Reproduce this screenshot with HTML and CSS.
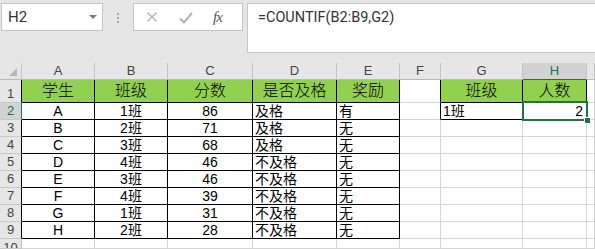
FILE: index.html
```html
<!DOCTYPE html>
<html lang="zh-CN">
<head>
	<meta charset="UTF-8">
	<title>COUNTIF</title>
	<link rel="stylesheet" href="styles.css">
</head>
<body>
	<div class="toolbar">
		<div class="namebox"><span>H2</span><span class="caret"></span></div>
		<div class="dots"><i></i><i></i><i></i></div>
		<div class="fxbox">
			<svg class="ico" width="12" height="10" viewBox="0 0 12 10"><path d="M1.5 0.5 L10.5 9.5 M10.5 0.5 L1.5 9.5" stroke="#b3b3b3" stroke-width="1.4" fill="none"/></svg>
			<svg class="ico ok" width="14" height="12" viewBox="0 0 14 12"><path d="M1 6.5 L5 10.5 L13 1" stroke="#b3b3b3" stroke-width="2" fill="none"/></svg>
			<span class="fx">fx</span>
		</div>
		<div class="formula">=COUNTIF(B2:B9,G2)</div>
	</div>

	<div class="sheet">
		<!-- column headers -->
		<div class="ch corner"><span class="tri"></span></div>
		<div class="ch">A</div>
		<div class="ch">B</div>
		<div class="ch">C</div>
		<div class="ch">D</div>
		<div class="ch">E</div>
		<div class="ch">F</div>
		<div class="ch">G</div>
		<div class="ch cur">H</div>
		<div class="ch"></div>

		<!-- row 1 -->
		<div class="rh bk">1</div>
		<div class="c hd bx">学生</div>
		<div class="c hd bx">班级</div>
		<div class="c hd bx">分数</div>
		<div class="c hd bx">是否及格</div>
		<div class="c hd bx">奖励</div>
		<div class="c edge"></div>
		<div class="c hd bx">班级</div>
		<div class="c hd bx">人数</div>
		<div class="c"></div>

		<!-- row 2 -->
		<div class="rh cur">2</div>
		<div class="c bx mid">A</div>
		<div class="c bx mid">1班</div>
		<div class="c bx mid">86</div>
		<div class="c bx">及格</div>
		<div class="c bx">有</div>
		<div class="c edge"></div>
		<div class="c bx">1班</div>
		<div class="c bx right active">2<span class="selbox"></span><span class="handle"></span></div>
		<div class="c"></div>

		<!-- row 3 -->
		<div class="rh bk">3</div>
		<div class="c bx mid">B</div>
		<div class="c bx mid">2班</div>
		<div class="c bx mid">71</div>
		<div class="c bx">及格</div>
		<div class="c bx">无</div>
		<div class="c"></div><div class="c"></div><div class="c"></div><div class="c"></div>

		<!-- row 4 -->
		<div class="rh bk">4</div>
		<div class="c bx mid">C</div>
		<div class="c bx mid">3班</div>
		<div class="c bx mid">68</div>
		<div class="c bx">及格</div>
		<div class="c bx">无</div>
		<div class="c"></div><div class="c"></div><div class="c"></div><div class="c"></div>

		<!-- row 5 -->
		<div class="rh bk">5</div>
		<div class="c bx mid">D</div>
		<div class="c bx mid">4班</div>
		<div class="c bx mid">46</div>
		<div class="c bx">不及格</div>
		<div class="c bx">无</div>
		<div class="c"></div><div class="c"></div><div class="c"></div><div class="c"></div>

		<!-- row 6 -->
		<div class="rh bk">6</div>
		<div class="c bx mid">E</div>
		<div class="c bx mid">3班</div>
		<div class="c bx mid">46</div>
		<div class="c bx">不及格</div>
		<div class="c bx">无</div>
		<div class="c"></div><div class="c"></div><div class="c"></div><div class="c"></div>

		<!-- row 7 -->
		<div class="rh bk">7</div>
		<div class="c bx mid">F</div>
		<div class="c bx mid">4班</div>
		<div class="c bx mid">39</div>
		<div class="c bx">不及格</div>
		<div class="c bx">无</div>
		<div class="c"></div><div class="c"></div><div class="c"></div><div class="c"></div>

		<!-- row 8 -->
		<div class="rh bk">8</div>
		<div class="c bx mid">G</div>
		<div class="c bx mid">1班</div>
		<div class="c bx mid">31</div>
		<div class="c bx">不及格</div>
		<div class="c bx">无</div>
		<div class="c"></div><div class="c"></div><div class="c"></div><div class="c"></div>

		<!-- row 9 -->
		<div class="rh bk">9</div>
		<div class="c bx mid">H</div>
		<div class="c bx mid">2班</div>
		<div class="c bx mid">28</div>
		<div class="c bx">不及格</div>
		<div class="c bx">无</div>
		<div class="c"></div><div class="c"></div><div class="c"></div><div class="c"></div>

		<!-- row 10 -->
		<div class="rh last">10</div>
		<div class="c"></div><div class="c"></div><div class="c"></div><div class="c"></div><div class="c"></div>
		<div class="c"></div><div class="c"></div><div class="c"></div><div class="c"></div>
	</div>
</body>
</html>
```

FILE: styles.css
```css
*{
	margin:0;
	padding:0;
	box-sizing:border-box;
}
body{
	width:595px;
	height:249px;
	overflow:hidden;
	background:#e6e6e6;
	font-family:"Liberation Sans","Noto Sans CJK SC",sans-serif;
	color:#000;
}

/* formula bar */
.toolbar{
	display:flex;
	align-items:flex-start;
	height:63px;
	padding:3px 0 0 1px;
}
.namebox{
	width:102px;
	height:28px;
	background:#fff;
	border:1px solid #c6c6c6;
	display:flex;
	align-items:center;
	justify-content:space-between;
	padding:0 5px 0 6px;
	font-family:Roboto,"Liberation Sans",sans-serif;
	font-size:15px;
	color:#333;
}
.caret{
	width:0;
	height:0;
	border-left:4px solid transparent;
	border-right:4px solid transparent;
	border-top:4px solid #7a7a7a;
	margin-top:-1px;
}
.dots{
	width:30px;
	display:flex;
	flex-direction:column;
	align-items:center;
	gap:2px;
	padding-top:10px;
}
.dots i{
	width:2px;
	height:2px;
	background:#a6a6a6;
}
.fxbox{
	width:110px;
	height:28px;
	background:#fff;
	border:1px solid #c6c6c6;
	display:flex;
	align-items:center;
	padding-left:12px;
}
.ico{
	display:block;
}
.ok{
	margin-left:21px;
	margin-top:2px;
}
.fx{
	margin-left:20px;
	font-family:"Liberation Serif",serif;
	font-style:italic;
	font-size:15px;
	color:#555;
	letter-spacing:-1px;
}
.formula{
	flex:1;
	height:50px;
	margin-left:4px;
	background:#fff;
	border:1px solid #c6c6c6;
	border-right:0;
	padding:5px 10px;
	font-family:Roboto,"Liberation Sans",sans-serif;
	font-size:14.5px;
	color:#333;
}

/* sheet */
.sheet{
	display:grid;
	grid-template-columns:22px 73px 73px 85px 84px 63px 41px 82px 64px 1fr;
	grid-template-rows:17px 23px repeat(8,17px) 10px;
	background:#fff;
}
.ch{
	background:#e6e6e6;
	border-right:1px solid #c4c4c4;
	border-bottom:1px solid #b8b8b8;
	font-size:13px;
	line-height:16px;
	text-align:center;
	color:#444;
}
.corner{
	display:flex;
	justify-content:flex-end;
	align-items:flex-end;
	padding:0 4px 3px 0;
}
.tri{
	width:0;
	height:0;
	border-left:8px solid transparent;
	border-bottom:8px solid #b8b8b8;
}
.ch.cur{
	background:#d2d2d2;
	border-bottom-color:#217346;
	color:#217346;
}
.rh{
	background:#e6e6e6;
	border-right:1px solid #c4c4c4;
	border-bottom:1px solid #c8c8c8;
	font-size:13px;
	line-height:16px;
	text-align:center;
	color:#444;
	display:flex;
	align-items:flex-end;
	justify-content:center;
	overflow:hidden;
}
.rh.last{
	align-items:flex-start;
	padding-top:1px;
}
.rh.bk{
	border-right-color:#000;
}
.rh.cur{
	background:#d2d2d2;
	border-right:1px solid #217346;
	color:#217346;
}
.c{
	border-right:1px solid #d4d4d4;
	border-bottom:1px solid #d4d4d4;
	font-size:14px;
	line-height:16px;
	padding:0 2px;
	white-space:nowrap;
}
.bx{
	border-right-color:#000;
	border-bottom-color:#000;
}
.edge{
	border-right-color:#000;
}
.hd{
	background:#92d050;
	font-size:16px;
	font-weight:300;
	line-height:22px;
	text-align:center;
}
.mid{
	text-align:center;
}
.right{
	text-align:right;
	padding-right:3px;
}
.active{
	position:relative;
}
.selbox{
	position:absolute;
	top:-2px;
	left:-1px;
	right:-2px;
	bottom:-2px;
	border:2px solid #217346;
}
.handle{
	position:absolute;
	right:-5px;
	bottom:-5px;
	width:7px;
	height:7px;
	background:#217346;
	border:1px solid #fff;
	z-index:2;
}
```
